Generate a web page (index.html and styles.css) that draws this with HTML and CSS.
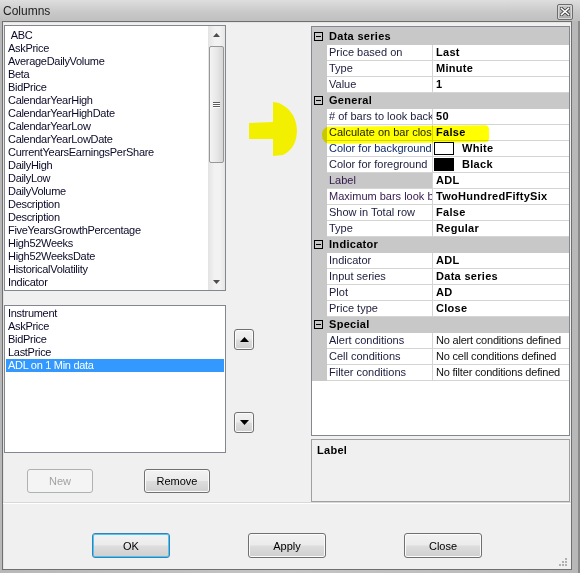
FILE: index.html
```
<!DOCTYPE html>
<html>
<head>
<meta charset="utf-8">
<link rel="stylesheet" href="styles.css">
</head>
<body>
<div class="window">
  <div class="titlebar">
    <span class="title">Columns</span>
    <span class="xbtn"><svg width="10" height="9" viewBox="0 0 10 9"><path d="M1.5 1.5 L8.5 7.5 M8.5 1.5 L1.5 7.5" stroke="#3a3a3a" stroke-width="3.2" stroke-linecap="square"/><path d="M1.5 1.5 L8.5 7.5 M8.5 1.5 L1.5 7.5" stroke="#fff" stroke-width="1.6" stroke-linecap="square"/></svg></span>
  </div>
  <div class="client">
    <div class="main">
      <div class="left">
        <div class="row-top">
          <div class="list list1">
            <div class="items">
              <div class="item">&nbsp;ABC</div>
              <div class="item">AskPrice</div>
              <div class="item">AverageDailyVolume</div>
              <div class="item">Beta</div>
              <div class="item">BidPrice</div>
              <div class="item">CalendarYearHigh</div>
              <div class="item">CalendarYearHighDate</div>
              <div class="item">CalendarYearLow</div>
              <div class="item">CalendarYearLowDate</div>
              <div class="item">CurrentYearsEarningsPerShare</div>
              <div class="item">DailyHigh</div>
              <div class="item">DailyLow</div>
              <div class="item">DailyVolume</div>
              <div class="item">Description</div>
              <div class="item">Description</div>
              <div class="item">FiveYearsGrowthPercentage</div>
              <div class="item">High52Weeks</div>
              <div class="item">High52WeeksDate</div>
              <div class="item">HistoricalVolatility</div>
              <div class="item">Indicator</div>
            </div>
            <div class="vscroll">
              <div class="sarrow"><svg width="7" height="4" viewBox="0 0 7 4"><path d="M0 4 L3.5 0 L7 4 Z" fill="#4d4d4d"/></svg></div>
              <div class="thumb"><span class="grip"></span><span class="grip"></span><span class="grip"></span></div>
              <div class="track"></div>
              <div class="sarrow"><svg width="7" height="4" viewBox="0 0 7 4"><path d="M0 0 L7 0 L3.5 4 Z" fill="#4d4d4d"/></svg></div>
            </div>
          </div>
          <div class="side side1">
            <svg class="yarrow" width="48" height="55" viewBox="0 0 48 55"><path d="M0 21 L24 20 L24 0 L30 1 Q47 9 48 28 Q48 46 34 53 L24 54 L24 37 L0 37 Z" fill="#f2f000"/></svg>
          </div>
        </div>
        <div class="row-mid">
          <div class="list list2">
            <div class="item">Instrument</div>
            <div class="item">AskPrice</div>
            <div class="item">BidPrice</div>
            <div class="item">LastPrice</div>
            <div class="item sel">ADL on 1 Min data</div>
          </div>
          <div class="side side2">
            <span class="btn sq"><svg width="9" height="5" viewBox="0 0 9 5"><path d="M0 5 L4.5 0 L9 5 Z" fill="#000"/></svg></span>
            <span class="btn sq down"><svg width="9" height="5" viewBox="0 0 9 5"><path d="M0 0 L9 0 L4.5 5 Z" fill="#000"/></svg></span>
          </div>
        </div>
        <div class="row-btns">
          <span class="btn small disabled">New</span>
          <span class="btn small">Remove</span>
        </div>
      </div>
      <div class="right">
        <div class="pgrid">
          <div class="prow cat"><span class="minus"></span><span class="cname">Data series</span></div>
          <div class="prow"><span class="pm"></span><span class="pn">Price based on</span><span class="pv">Last</span></div>
          <div class="prow"><span class="pm"></span><span class="pn">Type</span><span class="pv">Minute</span></div>
          <div class="prow"><span class="pm"></span><span class="pn">Value</span><span class="pv">1</span></div>
          <div class="prow cat"><span class="minus"></span><span class="cname">General</span></div>
          <div class="prow"><span class="pm"></span><span class="pn">#&nbsp;of bars to look back</span><span class="pv">50</span></div>
          <div class="prow"><span class="pm"></span><span class="pn">Calculate on bar close</span><span class="pv">False</span></div>
          <div class="prow"><span class="pm"></span><span class="pn blue">Color for background</span><span class="pv"><span class="swatch white"></span>White</span></div>
          <div class="prow"><span class="pm"></span><span class="pn">Color for foreground</span><span class="pv"><span class="swatch black"></span>Black</span></div>
          <div class="prow"><span class="pm"></span><span class="pn selname">Label</span><span class="pv">ADL</span></div>
          <div class="prow"><span class="pm"></span><span class="pn purple">Maximum bars look back</span><span class="pv">TwoHundredFiftySix</span></div>
          <div class="prow"><span class="pm"></span><span class="pn">Show in Total row</span><span class="pv">False</span></div>
          <div class="prow"><span class="pm"></span><span class="pn">Type</span><span class="pv">Regular</span></div>
          <div class="prow cat"><span class="minus"></span><span class="cname">Indicator</span></div>
          <div class="prow"><span class="pm"></span><span class="pn">Indicator</span><span class="pv">ADL</span></div>
          <div class="prow"><span class="pm"></span><span class="pn">Input series</span><span class="pv">Data series</span></div>
          <div class="prow"><span class="pm"></span><span class="pn">Plot</span><span class="pv">AD</span></div>
          <div class="prow"><span class="pm"></span><span class="pn">Price type</span><span class="pv">Close</span></div>
          <div class="prow cat"><span class="minus"></span><span class="cname">Special</span></div>
          <div class="prow"><span class="pm"></span><span class="pn">Alert conditions</span><span class="pv normal">No alert conditions defined</span></div>
          <div class="prow"><span class="pm"></span><span class="pn">Cell conditions</span><span class="pv normal">No cell conditions defined</span></div>
          <div class="prow"><span class="pm"></span><span class="pn">Filter conditions</span><span class="pv normal">No filter conditions defined</span></div>
          <div class="marker"></div>
        </div>
        <div class="desc"><span class="desc-title">Label</span></div>
      </div>
    </div>
    <div class="bottom">
      <span class="btn big focus">OK</span>
      <span class="btn big">Apply</span>
      <span class="btn big">Close</span>
      <svg class="grip-corner" width="8" height="8" viewBox="0 0 8 8"><g fill="#b0b0b0"><rect x="6" y="0" width="2" height="2"/><rect x="3" y="3" width="2" height="2"/><rect x="6" y="3" width="2" height="2"/><rect x="0" y="6" width="2" height="2"/><rect x="3" y="6" width="2" height="2"/><rect x="6" y="6" width="2" height="2"/></g></svg>
    </div>
  </div>
</div>
</body>
</html>
```

FILE: styles.css
```
* { box-sizing: border-box; }
html, body { margin: 0; padding: 0; }
body {
  width: 580px;
  height: 573px;
  overflow: hidden;
  font-family: "Liberation Sans", Arial, sans-serif;
  font-size: 11px;
  color: #000;
  background: #bdbdbd;
}
.window {
  width: 580px;
  height: 573px;
  display: flex;
  flex-direction: column;
  padding: 0 8px 3px 2px;
  background: linear-gradient(to right, #b8b8b8 0, #c4c4c4 50%, #b8b8b8 100%);
  box-shadow: inset -4px 0 0 -2px #8a8a8a;
}
.titlebar {
  height: 21px;
  margin: 0 -8px 0 -2px;
  padding: 0 6px 0 3px;
  display: flex;
  align-items: center;
  justify-content: space-between;
  background: linear-gradient(#dedede, #c8c8c8 60%, #bfbfbf);
}
.title {
  font-size: 12px;
  color: #1e1e1e;
  padding-top: 1px;
}
.xbtn {
  width: 16px;
  height: 16px;
  margin-top: 2px;
  margin-right: 1px;
  border: 1px solid #6c6c6c;
  border-radius: 2px;
  background: linear-gradient(#c9c9c9, #a9a9a9);
  box-shadow: inset 0 0 0 1px #d8d8d8;
  display: flex;
  align-items: center;
  justify-content: center;
}
.client {
  flex: 1;
  display: flex;
  flex-direction: column;
  background: #f0f0f0;
  border: 1px solid #6f6f6f;
  box-shadow: inset 1px 1px 0 #e4e4e4;
}
.main {
  height: 482px;
  display: flex;
  padding-top: 3px;
  border-bottom: 1px solid #ffffff;
  box-shadow: 0 -1px 0 #d8d8d8 inset;
}
.left {
  width: 308px;
  padding-left: 1px;
  display: flex;
  flex-direction: column;
}
.row-top, .row-mid { display: flex; }
.list {
  width: 222px;
  background: #fff;
  border: 1px solid #828790;
}
.list1 {
  height: 266px;
  display: flex;
}
.list1 .items {
  flex: 1;
  padding: 3px 0 0 1px;
  overflow: hidden;
}
.item {
  height: 13px;
  line-height: 13px;
  padding-left: 2px;
  white-space: nowrap;
  color: #0a0a28;
  letter-spacing: -0.3px;
}
.vscroll {
  width: 17px;
  display: flex;
  flex-direction: column;
  background: linear-gradient(to right, #e3e3e3, #f2f2f2 40%, #f2f2f2 70%, #e6e6e6);
}
.sarrow {
  height: 17px;
  display: flex;
  align-items: center;
  justify-content: center;
}
.thumb {
  height: 117px;
  margin: 3px 1px 0 1px;
  border: 1px solid #979797;
  border-radius: 2px;
  background: linear-gradient(to right, #f4f4f4, #e8e8e8 50%, #d6d6d6);
  display: flex;
  flex-direction: column;
  align-items: center;
  justify-content: center;
  gap: 1px;
}
.grip {
  width: 7px;
  height: 1px;
  background: #5a5a5a;
  box-shadow: 0 1px 0 #fff;
}
.track { flex: 1; }
.side { width: 85px; }
.side1 { padding: 77px 0 0 23px; }
.yarrow { display: block; }
.row-mid { margin-top: 14px; }
.list2 {
  height: 148px;
  padding: 1px 1px 0 1px;
}
.list2 .item.sel {
  background: #3399ff;
  color: #fff;
}
.side2 {
  display: flex;
  flex-direction: column;
  align-items: flex-start;
  padding: 24px 0 0 8px;
}
.btn {
  display: flex;
  align-items: center;
  justify-content: center;
  border: 1px solid #707070;
  border-radius: 3px;
  background: linear-gradient(#f2f2f2 0%, #ebebeb 48%, #dddddd 52%, #cfcfcf 100%);
  box-shadow: inset 0 0 0 1px #fbfbfb;
  font-size: 11px;
  color: #000;
}
.btn.sq {
  width: 20px;
  height: 21px;
}
.btn.sq.down { margin-top: 62px; }
.row-btns {
  display: flex;
  margin-top: 16px;
  padding-left: 23px;
  gap: 51px;
}
.btn.small {
  width: 66px;
  height: 24px;
}
.btn.disabled {
  border-color: #adb2b5;
  background: #f4f4f4;
  box-shadow: none;
  color: #a3a3a3;
}
.right {
  width: 260px;
  display: flex;
  flex-direction: column;
}
.pgrid {
  position: relative;
  margin-top: 1px;
  width: 259px;
  height: 410px;
  border: 1px solid #828790;
  padding-top: 2px;
  background: #ffffff;
}
.pgrid::before {
  content: "";
  position: absolute;
  left: 0; right: 0; top: 0;
  height: 2px;
  background: #c8c8c8;
}
.prow {
  height: 16px;
  display: flex;
  border-bottom: 1px solid #d4d4d4;
}
.prow.cat {
  background: #c8c8c8;
  border-bottom-color: #c8c8c8;
  align-items: center;
}
.minus {
  width: 9px;
  height: 9px;
  margin: 0 0 0 2px;
  border: 1px solid #000;
  position: relative;
  flex: none;
}
.minus::after {
  content: "";
  position: absolute;
  left: 1px; right: 1px; top: 3px;
  height: 1px;
  background: #000;
}
.cname {
  margin-left: 6px;
  font-weight: bold;
  color: #000;
  line-height: 15px;
  letter-spacing: 0.3px;
}
.pm {
  width: 15px;
  flex: none;
  background: #c8c8c8;
  margin-bottom: -1px;
}
.pn {
  width: 106px;
  flex: none;
  padding-left: 2px;
  line-height: 15px;
  white-space: nowrap;
  overflow: hidden;
  border-right: 1px solid #d4d4d4;
  color: #1c1c3e;
}
.pn.blue { color: #102a6a; }
.pn.purple { color: #34184c; }
.pn.selname {
  background: #c8c8c8;
  color: #34184c;
}
.pv {
  flex: 1;
  padding-left: 3px;
  line-height: 15px;
  white-space: nowrap;
  overflow: hidden;
  font-weight: bold;
  letter-spacing: 0.3px;
  display: flex;
  align-items: center;
}
.pv.normal { font-weight: normal; color: #111; letter-spacing: -0.2px; }
.swatch {
  width: 20px;
  height: 13px;
  margin: 0 8px 0 -2px;
  border: 1px solid #000;
  flex: none;
}
.swatch.white { background: #fff; }
.swatch.black { background: #000; }
.marker {
  position: absolute;
  left: 10px;
  top: 99px;
  width: 167px;
  height: 17px;
  background: #ffff00;
  border-radius: 7px 4px 4px 8px;
  mix-blend-mode: multiply;
  transform: rotate(-0.6deg);
}
.desc {
  margin-top: 3px;
  width: 259px;
  height: 63px;
  border: 1px solid #a0a0a0;
  padding: 4px 0 0 5px;
}
.desc-title { font-weight: bold; letter-spacing: 0.3px; }
.bottom {
  flex: 1;
  position: relative;
  display: flex;
  align-items: flex-start;
  padding: 29px 0 0 89px;
  gap: 78px;
}
.btn.big {
  width: 78px;
  height: 25px;
}
.btn.focus {
  border-color: #3c7fb1;
  box-shadow: inset 0 0 0 1px #48c6f4;
}
.grip-corner {
  position: absolute;
  right: 4px;
  bottom: 3px;
}
```
